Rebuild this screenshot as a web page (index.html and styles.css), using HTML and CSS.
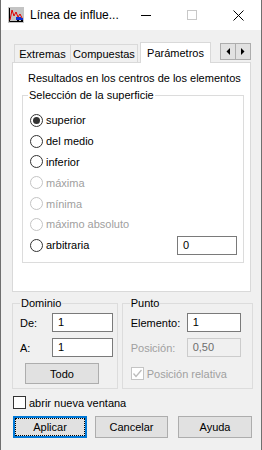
FILE: index.html
```html
<!DOCTYPE html>
<html lang="es">
<head>
    <meta charset="UTF-8">
    <title>Línea de influencia</title>
    <link rel="stylesheet" href="styles.css">
</head>
<body>
    <div class="window">
        <div class="titlebar">
            <svg class="app-icon" viewBox="0 0 16 16" width="16" height="16">
                <rect x="0" y="0" width="16" height="16" fill="#c4c4c4"/>
                <path d="M1.5 1 V14.5 H15" fill="none" stroke="#000" stroke-width="1"/>
                <path d="M2 13 L4 3 L6 9 L8 5 L10 10 L12 7 L14 11" fill="none" stroke="#e00000" stroke-width="1"/>
                <rect x="8" y="10" width="5" height="3" fill="#1030d0"/>
                <rect x="12" y="11" width="3" height="2" fill="#1030d0"/>
                <rect x="9" y="13" width="2" height="1" fill="#000"/>
                <rect x="13" y="13" width="2" height="1" fill="#000"/>
            </svg>
            <span class="title">Línea de influe...</span>
            <div class="caption">
                <span class="cap-btn">
                    <svg width="10" height="10" viewBox="0 0 10 10"><path d="M0 5.5 H10" stroke="#000" stroke-width="1"/></svg>
                </span>
                <span class="cap-btn">
                    <svg width="10" height="10" viewBox="0 0 10 10"><rect x="0.5" y="0.5" width="9" height="9" fill="none" stroke="#c8c8c8" stroke-width="1"/></svg>
                </span>
                <span class="cap-btn">
                    <svg width="11" height="11" viewBox="0 0 11 11"><path d="M0.5 0.5 L10.5 10.5 M10.5 0.5 L0.5 10.5" stroke="#000" stroke-width="1"/></svg>
                </span>
            </div>
        </div>

        <div class="client">
            <div class="tabs-row">
                <div class="tabs">
                    <div class="tab tab-extremas">Extremas</div>
                    <div class="tab tab-compuestas">Compuestas</div>
                    <div class="tab selected">Parámetros</div>
                </div>
                <div class="scroll-btns">
                    <span class="scroll-btn">
                        <svg width="4" height="7" viewBox="0 0 4 7"><path d="M4 0 V7 L0.5 3.5 Z" fill="#000"/></svg>
                    </span>
                    <span class="scroll-btn">
                        <svg width="4" height="7" viewBox="0 0 4 7"><path d="M0 0 V7 L3.5 3.5 Z" fill="#000"/></svg>
                    </span>
                </div>
            </div>

            <div class="panel">
                <p class="note">Resultados en los centros de los elementos</p>
                <fieldset class="group surface">
                    <legend>Selección de la superficie</legend>
                    <div class="radios">
                        <div class="radio checked"><span class="dot"></span>superior</div>
                        <div class="radio"><span class="dot"></span>del medio</div>
                        <div class="radio"><span class="dot"></span>inferior</div>
                        <div class="radio disabled"><span class="dot"></span>máxima</div>
                        <div class="radio disabled"><span class="dot"></span>mínima</div>
                        <div class="radio disabled"><span class="dot"></span>máximo absoluto</div>
                        <div class="radio"><span class="dot"></span>arbitraria<span class="field field-arb">0</span></div>
                    </div>
                </fieldset>
            </div>

            <div class="lower">
                <fieldset class="group dominio">
                    <legend>Dominio</legend>
                    <div class="group-body">
                        <div class="form-row"><span class="lbl">De:</span><span class="field">1</span></div>
                        <div class="form-row"><span class="lbl">A:</span><span class="field">1</span></div>
                        <button class="btn btn-todo">Todo</button>
                    </div>
                </fieldset>
                <fieldset class="group punto">
                    <legend>Punto</legend>
                    <div class="group-body">
                        <div class="form-row"><span class="lbl">Elemento:</span><span class="field">1</span></div>
                        <div class="form-row disabled"><span class="lbl">Posición:</span><span class="field">0,50</span></div>
                        <div class="check-row disabled">
                            <span class="box">
                                <svg width="11" height="11" viewBox="0 0 11 11"><path d="M1.5 5.5 L4 8.5 L9.5 2" fill="none" stroke="#bcbcbc" stroke-width="1.3"/></svg>
                            </span>Posición relativa
                        </div>
                    </div>
                </fieldset>
            </div>

            <div class="open-check"><span class="box"></span>abrir nueva ventana</div>

            <div class="actions">
                <button class="btn default btn-aplicar">Aplicar</button>
                <button class="btn btn-cancelar">Cancelar</button>
                <button class="btn btn-ayuda">Ayuda</button>
            </div>
        </div>
    </div>
</body>
</html>
```

FILE: styles.css
```css
body {
    margin: 0;
    font-family: 'Liberation Sans', Arial, sans-serif;
    font-size: 11px;
    color: #000;
}
.window {
    width: 262px;
    height: 450px;
    box-sizing: border-box;
    border-left: 1px solid #6f6f6f;
    border-right: 1px solid #6f6f6f;
    background: #f0f0f0;
}
.titlebar {
    height: 30px;
    background: #fff;
    display: flex;
    align-items: center;
}
.app-icon {
    margin-left: 7px;
}
.title {
    margin-left: 6px;
    font-size: 12px;
}
.caption {
    margin-left: auto;
    display: flex;
    height: 30px;
}
.cap-btn {
    width: 46px;
    display: flex;
    align-items: center;
    justify-content: center;
}
.client {
    padding: 12px 8px 0 11px;
}
.tabs-row {
    display: flex;
    height: 20px;
}
.tabs {
    display: flex;
    align-items: flex-end;
    padding-left: 2px;
}
.tab {
    height: 18px;
    box-sizing: border-box;
    border: 1px solid #d9d9d9;
    border-bottom: 0;
    display: flex;
    align-items: center;
    justify-content: center;
}
.tab-extremas {
    width: 57px;
}
.tab-compuestas {
    width: 68px;
    margin-left: -1px;
}
.tab.selected {
    width: 71px;
    height: 21px;
    margin-left: 2px;
    margin-bottom: -1px;
    background: #fff;
    position: relative;
    z-index: 1;
}
.scroll-btns {
    margin-left: auto;
    margin-right: 2px;
    margin-top: 1px;
    display: flex;
    align-self: flex-start;
}
.scroll-btn {
    width: 16px;
    height: 17px;
    box-sizing: border-box;
    border: 1px solid #adadad;
    background: #e1e1e1;
    display: flex;
    align-items: center;
    justify-content: center;
}
.scroll-btn + .scroll-btn {
    margin-left: -1px;
}
.panel {
    height: 230px;
    box-sizing: border-box;
    margin-right: 2px;
    border: 1px solid #d9d9d9;
    background: #fff;
    padding: 8px 6px 0 9px;
}
.note {
    margin: 0 0 0 6px;
    line-height: 15px;
    white-space: nowrap;
}
.group {
    margin: 0;
    padding: 0;
    min-width: 0;
    border: 1px solid #dcdcdc;
}
.group legend {
    padding: 0 1px;
    line-height: 15px;
}
.surface {
    margin-top: 2px;
}
.surface legend {
    margin-left: 5px;
}
.radios {
    padding: 7px 6px 6px 7px;
}
.radio {
    display: flex;
    align-items: center;
    height: 20.8px;
}
.dot {
    width: 13px;
    height: 13px;
    box-sizing: border-box;
    border: 1px solid #333;
    border-radius: 50%;
    margin-right: 3px;
    display: flex;
    align-items: center;
    justify-content: center;
}
.radio.checked .dot::after {
    content: '';
    width: 7px;
    height: 7px;
    border-radius: 50%;
    background: #333;
}
.radio.disabled {
    color: #a0a0a0;
}
.radio.disabled .dot {
    border-color: #c4c4c4;
}
.field {
    height: 19px;
    box-sizing: border-box;
    border: 1px solid #7a7a7a;
    background: #fff;
    padding-left: 5px;
    line-height: 17px;
}
.field-arb {
    width: 60px;
    margin-left: auto;
}
.lower {
    display: flex;
    gap: 4px;
    margin-top: 4px;
}
.dominio {
    width: 105px;
}
.punto {
    width: 131px;
}
.dominio legend,
.punto legend {
    margin-left: 7px;
}
.dominio .group-body {
    padding: 2px 3px 4px 7px;
}
.punto .group-body {
    padding: 2px 3px 4px 8px;
}
.form-row {
    display: flex;
    align-items: center;
    height: 19px;
    margin-bottom: 6px;
}
.dominio .lbl {
    width: 32px;
}
.dominio .field {
    width: 61px;
}
.punto .lbl {
    width: 56px;
}
.punto .field {
    width: 54px;
}
.form-row.disabled .lbl {
    color: #a0a0a0;
}
.form-row.disabled .field {
    background: #f0f0f0;
    border-color: #cccccc;
    color: #6d6d6d;
}
.check-row {
    display: flex;
    align-items: center;
    height: 21px;
}
.check-row.disabled {
    color: #a0a0a0;
}
.box {
    width: 13px;
    height: 13px;
    box-sizing: border-box;
    border: 1px solid #333;
    background: #fff;
    margin-right: 3px;
    display: flex;
    align-items: center;
    justify-content: center;
}
.check-row.disabled .box {
    border-color: #c4c4c4;
}
.open-check {
    display: flex;
    align-items: center;
    height: 15px;
    margin-top: 6px;
    padding-left: 1px;
}
.btn {
    box-sizing: border-box;
    border: 1px solid #adadad;
    background: #e1e1e1;
    font: inherit;
    color: #000;
    padding: 0;
    display: flex;
    align-items: center;
    justify-content: center;
}
.btn-todo {
    width: 74px;
    height: 21px;
    margin-left: 5px;
}
.actions {
    display: flex;
    margin-top: 6px;
}
.actions .btn {
    height: 22px;
}
.btn-aplicar {
    width: 74px;
    margin-left: 1px;
}
.btn-cancelar {
    width: 73px;
    margin-left: 8px;
}
.btn-ayuda {
    width: 74px;
    margin-left: 10px;
}
.btn.default {
    border: 2px solid #0078d7;
    outline: 1px dotted #000;
    outline-offset: -3px;
}
```
